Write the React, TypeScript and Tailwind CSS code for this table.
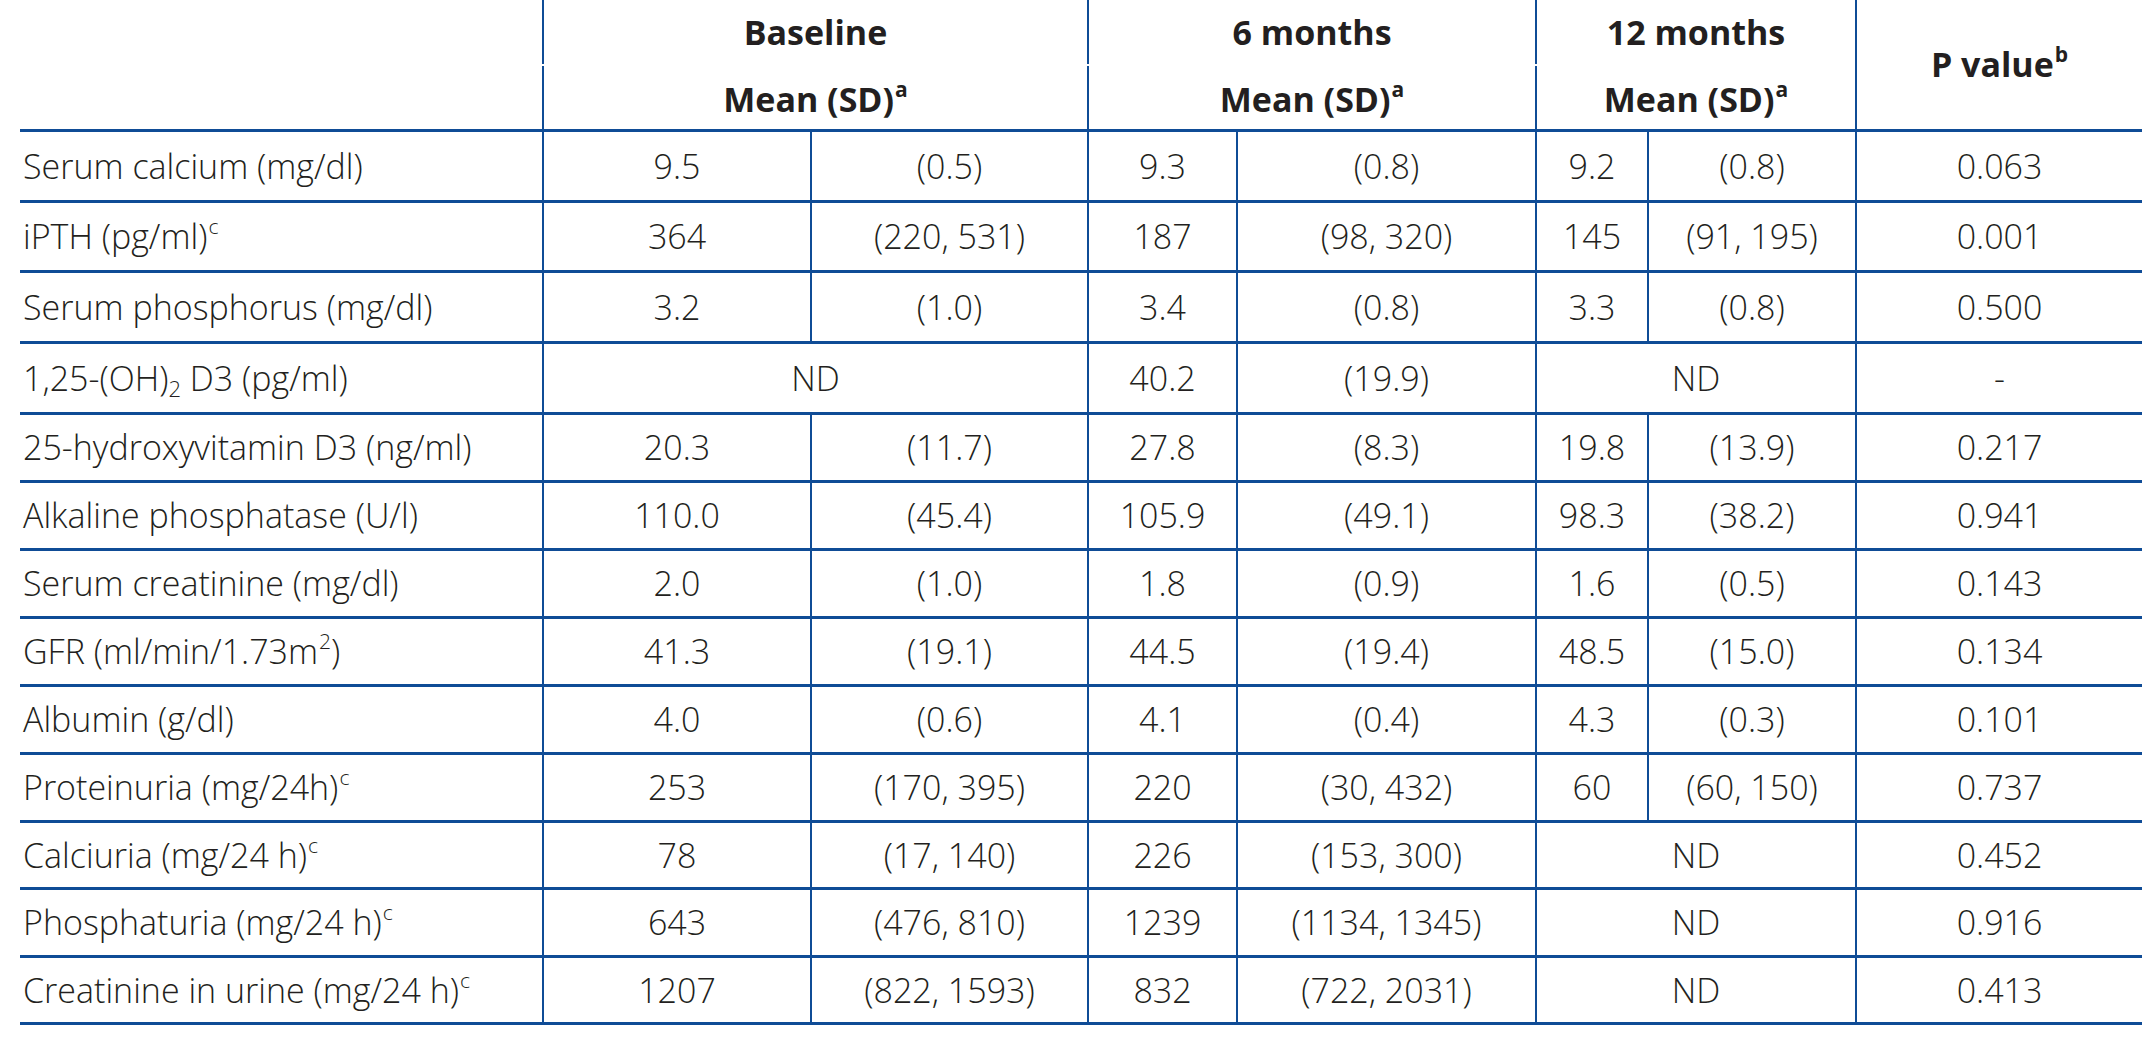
import type { ReactNode } from "react";

type Pair = [string, string] | null;

interface Row {
  label: ReactNode;
  base: Pair;
  m6: Pair;
  m12: Pair;
  p: string;
  h: string;
}

const Sup = ({ children }: { children: ReactNode }) => (
  <sup className="text-[21px] ml-[1px]">{children}</sup>
);

const rows: Row[] = [
  { label: "Serum calcium (mg/dl)", base: ["9.5", "(0.5)"], m6: ["9.3", "(0.8)"], m12: ["9.2", "(0.8)"], p: "0.063", h: "h-[71px]" },
  { label: <>iPTH (pg/ml)<Sup>c</Sup></>, base: ["364", "(220, 531)"], m6: ["187", "(98, 320)"], m12: ["145", "(91, 195)"], p: "0.001", h: "h-[70px]" },
  { label: "Serum phosphorus (mg/dl)", base: ["3.2", "(1.0)"], m6: ["3.4", "(0.8)"], m12: ["3.3", "(0.8)"], p: "0.500", h: "h-[71px]" },
  {
    label: (
      <>
        1,25-(OH)<sub className="text-[22px] -bottom-[0.45em]">2</sub>
        {"\u00a0"}D3 (pg/ml)
      </>
    ),
    base: null,
    m6: ["40.2", "(19.9)"],
    m12: null,
    p: "-",
    h: "h-[71px]",
  },
  { label: "25-hydroxyvitamin D3 (ng/ml)", base: ["20.3", "(11.7)"], m6: ["27.8", "(8.3)"], m12: ["19.8", "(13.9)"], p: "0.217", h: "h-[68px]" },
  { label: "Alkaline phosphatase (U/l)", base: ["110.0", "(45.4)"], m6: ["105.9", "(49.1)"], m12: ["98.3", "(38.2)"], p: "0.941", h: "h-[68px]" },
  { label: "Serum creatinine (mg/dl)", base: ["2.0", "(1.0)"], m6: ["1.8", "(0.9)"], m12: ["1.6", "(0.5)"], p: "0.143", h: "h-[68px]" },
  { label: <>GFR (ml/min/1.73m<Sup>2</Sup>)</>, base: ["41.3", "(19.1)"], m6: ["44.5", "(19.4)"], m12: ["48.5", "(15.0)"], p: "0.134", h: "h-[68px]" },
  { label: "Albumin (g/dl)", base: ["4.0", "(0.6)"], m6: ["4.1", "(0.4)"], m12: ["4.3", "(0.3)"], p: "0.101", h: "h-[68px]" },
  { label: <>Proteinuria (mg/24h)<Sup>c</Sup></>, base: ["253", "(170, 395)"], m6: ["220", "(30, 432)"], m12: ["60", "(60, 150)"], p: "0.737", h: "h-[68px]" },
  { label: <>Calciuria (mg/24 h)<Sup>c</Sup></>, base: ["78", "(17, 140)"], m6: ["226", "(153, 300)"], m12: null, p: "0.452", h: "h-[67px]" },
  { label: <>Phosphaturia (mg/24 h)<Sup>c</Sup></>, base: ["643", "(476, 810)"], m6: ["1239", "(1134, 1345)"], m12: null, p: "0.916", h: "h-[68px]" },
  { label: <>Creatinine in urine (mg/24 h)<Sup>c</Sup></>, base: ["1207", "(822, 1593)"], m6: ["832", "(722, 2031)"], m12: null, p: "0.413", h: "h-[67px]" },
];

const cell = "shrink-0 border-l-2 border-[#0f4c96] flex items-center justify-center";

function PairCells({ pair, a, b, all }: { pair: Pair; a: string; b: string; all: string }) {
  if (!pair) return <div className={`${all} ${cell}`}>ND</div>;
  return (
    <>
      <div className={`${a} ${cell}`}>{pair[0]}</div>
      <div className={`${b} ${cell}`}>{pair[1]}</div>
    </>
  );
}

function Group({ w, title }: { w: string; title: string }) {
  return (
    <div className={`${w} shrink-0 flex flex-col`}>
      <div className="h-[64px] border-l-2 border-[#0f4c96] flex items-center justify-center font-bold">
        {title}
      </div>
      <div className="mt-[2px] flex-1 border-l-2 border-[#0f4c96] flex items-center justify-center font-bold pt-[4px]">
        Mean (SD)<Sup>a</Sup>
      </div>
    </div>
  );
}

export default function App() {
  return (
    <div className="w-[2156px] h-[1039px] bg-white text-[#231f20] font-['Open_Sans',sans-serif] text-[34px] font-light">
      <div className="ml-[20px] w-[2122px]">
        <div className="flex h-[132px] border-b-[3px] border-[#0f4c96]">
          <div className="w-[522px] shrink-0" />
          <Group w="w-[545px]" title="Baseline" />
          <Group w="w-[448px]" title="6 months" />
          <Group w="w-[320px]" title="12 months" />
          <div className="w-[287px] shrink-0 border-l-2 border-[#0f4c96] flex items-center justify-center font-bold">
            P value<Sup>b</Sup>
          </div>
        </div>

        {rows.map((r, i) => (
          <div key={i} className={`flex ${r.h} border-b-[3px] border-[#0f4c96]`}>
            <div className="w-[522px] shrink-0 pl-[3px] flex items-center whitespace-nowrap">{r.label}</div>
            <PairCells pair={r.base} a="w-[268px]" b="w-[277px]" all="w-[545px]" />
            <PairCells pair={r.m6} a="w-[149px]" b="w-[299px]" all="w-[448px]" />
            <PairCells pair={r.m12} a="w-[112px]" b="w-[208px]" all="w-[320px]" />
            <div className={`w-[287px] ${cell}`}>{r.p}</div>
          </div>
        ))}
      </div>
    </div>
  );
}
